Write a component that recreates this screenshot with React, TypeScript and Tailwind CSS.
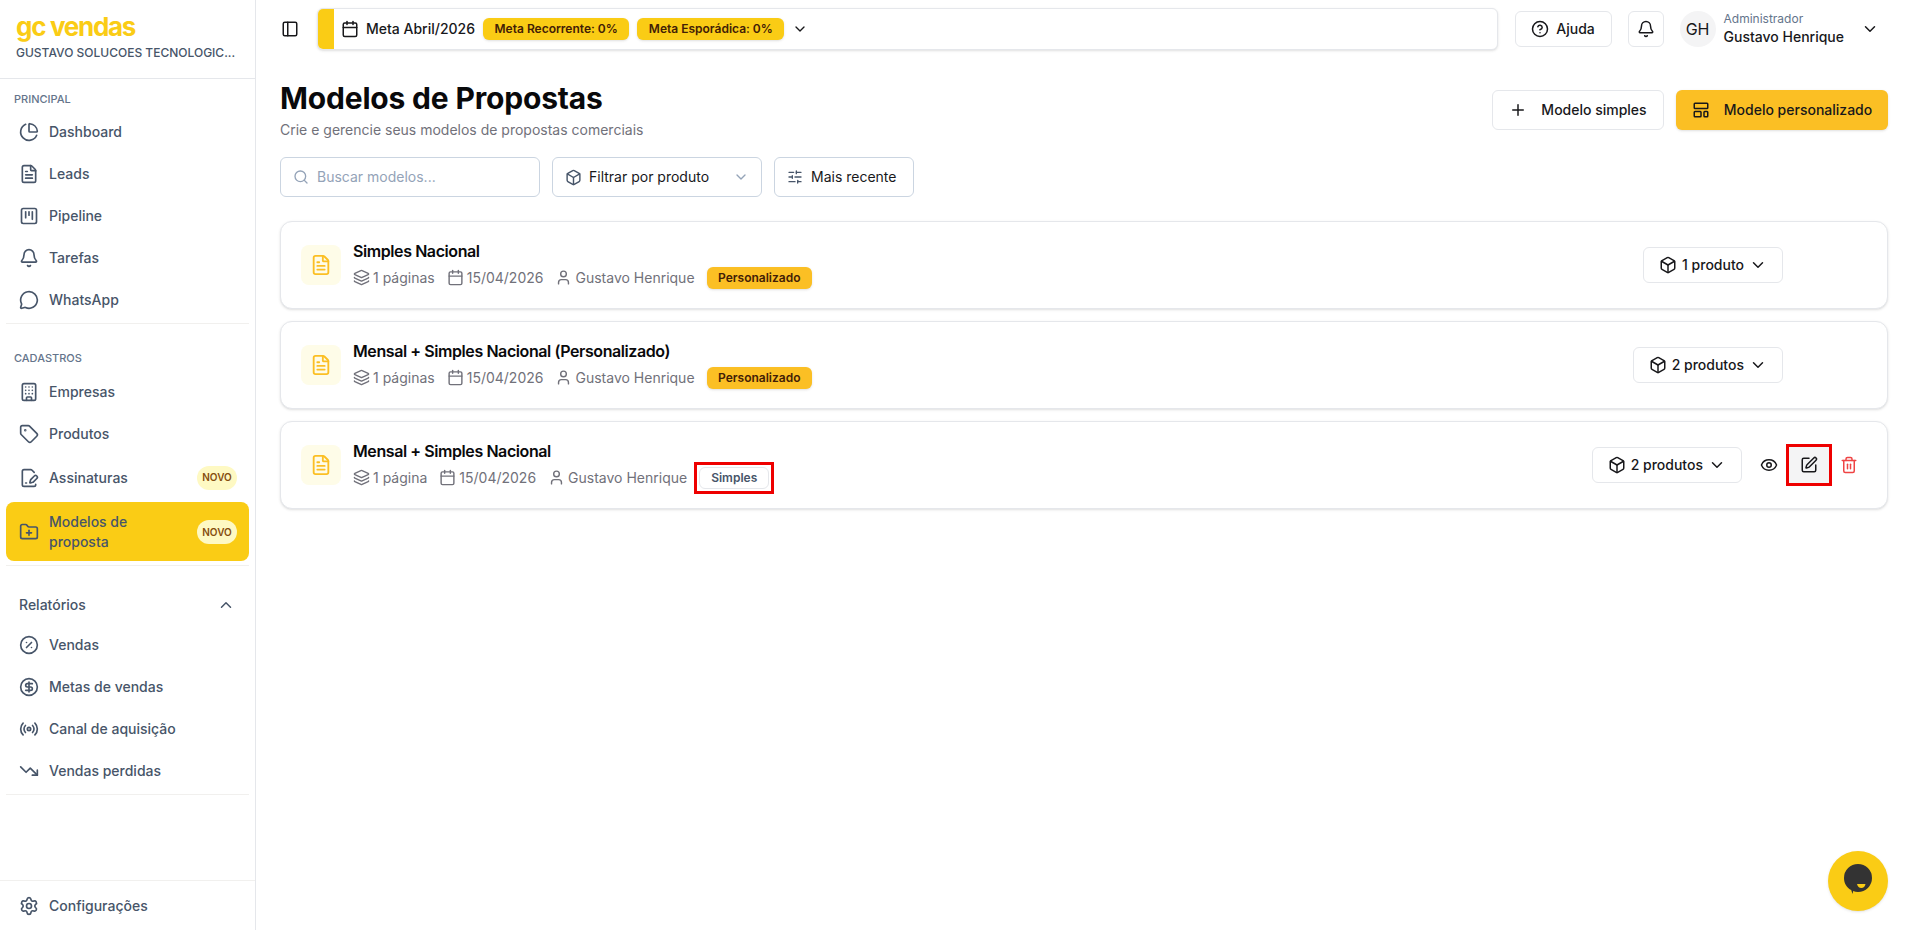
import {
  Bell,
  Building,
  Calendar,
  ChartPie,
  ChevronDown,
  ChevronUp,
  CircleDollarSign,
  CircleHelp,
  CirclePercent,
  Eye,
  FilePenLine,
  FileText,
  FolderPlus,
  Layers,
  LayoutTemplate,
  MessageCircle,
  Box,
  PanelLeft,
  Plus,
  Radio,
  Search,
  Settings,
  SlidersHorizontal,
  SquareKanban,
  SquarePen,
  Tag,
  Trash2,
  TrendingDown,
  User,
} from "lucide-react";
import type { ReactNode } from "react";

function NavItem({ icon, label }: { icon: ReactNode; label: string }) {
  return (
    <a className="flex h-[42px] items-center gap-[10px] rounded-lg pl-[13px] pr-3 text-sm font-medium text-[#475569]">
      {icon}
      <span>{label}</span>
    </a>
  );
}

function NovoBadge() {
  return (
    <span className="flex h-6 w-10 shrink-0 items-center justify-center rounded-full bg-[#fef9c3] text-[10px] font-semibold text-[#854d0e]">
      NOVO
    </span>
  );
}

function Sidebar() {
  return (
    <aside className="flex h-screen w-[256px] shrink-0 flex-col border-r border-[#e5e7eb] bg-white">
      <div className="h-[79px] border-b border-[#e5e7eb] pl-4 pt-[11px]">
        <div className="text-[26px] font-bold leading-8 tracking-[-0.05em] text-[#facc15]">gc vendas</div>
        <div className="mt-[2px] text-[12px] font-medium leading-4 text-[#475569]">GUSTAVO SOLUCOES TECNOLOGIC...</div>
      </div>

      <div className="px-[6px]">
        <div className="mt-3 mb-1 h-4 pl-2 text-[11px] font-medium uppercase leading-4 text-[#64748b]">Principal</div>
        <NavItem icon={<ChartPie size={20} />} label="Dashboard" />
        <NavItem icon={<FileText size={20} />} label="Leads" />
        <NavItem icon={<SquareKanban size={20} />} label="Pipeline" />
        <NavItem icon={<Bell size={20} />} label="Tarefas" />
        <NavItem icon={<MessageCircle size={20} />} label="WhatsApp" />
        <div className="mt-[2px] border-t border-[#f1f0ee]" />

        <div className="mt-[26px] mb-[5px] h-4 pl-2 text-[11px] font-medium uppercase leading-4 text-[#64748b]">Cadastros</div>
        <NavItem icon={<Building size={20} />} label="Empresas" />
        <NavItem icon={<Tag size={20} />} label="Produtos" />
        <a className="flex h-[45px] items-center gap-[10px] rounded-lg pl-[13px] pr-3 text-sm font-medium text-[#475569]">
          <FilePenLine size={20} />
          <span className="flex-1">Assinaturas</span>
          <NovoBadge />
        </a>
        <a className="mt-[2px] flex h-[59px] items-center gap-[10px] rounded-lg bg-[#facc15] pl-[13px] pr-3 text-sm font-medium leading-5 text-[#475569]">
          <FolderPlus size={20} />
          <span className="flex-1">
            Modelos de
            <br />
            proposta
          </span>
          <NovoBadge />
        </a>
        <div className="mt-1 border-t border-[#f1f0ee]" />

        <div className="mt-[29px] mb-[9px] flex h-5 items-center justify-between pl-[13px] pr-[14px] text-sm font-medium text-[#475569]">
          <span>Relatórios</span>
          <ChevronUp size={18} />
        </div>
        <NavItem icon={<CirclePercent size={20} />} label="Vendas" />
        <NavItem icon={<CircleDollarSign size={20} />} label="Metas de vendas" />
        <NavItem icon={<Radio size={20} />} label="Canal de aquisição" />
        <NavItem icon={<TrendingDown size={20} />} label="Vendas perdidas" />
        <div className="mt-[2px] border-t border-[#f1f0ee]" />
      </div>

      <div className="mt-auto border-t border-[#f1f0ee] px-[6px] pb-[3px] pt-[4px]">
        <NavItem icon={<Settings size={20} />} label="Configurações" />
      </div>
    </aside>
  );
}

function GoalBadge({ children }: { children: ReactNode }) {
  return (
    <span className="flex h-[22px] items-center rounded-md bg-[#facc15] px-[11.5px] text-[12px] font-semibold text-[#422006] shadow-sm">
      {children}
    </span>
  );
}

function Header() {
  return (
    <header className="flex h-[58px] items-center pl-[25px] pr-[33px]">
      <PanelLeft size={18} className="mr-[18px] text-[#18181b]" />
      <div className="flex h-[42px] flex-1 items-center gap-2 overflow-hidden rounded-md border border-[#e5e7eb] bg-white shadow-sm">
        <div className="h-full w-[16px] bg-[#facc15]" />
        <Calendar size={18} className="ml-[-1px] text-[#18181b]" />
        <span className="ml-[-1px] text-sm font-medium text-[#18181b]">Meta Abril/2026</span>
        <GoalBadge>Meta Recorrente: 0%</GoalBadge>
        <GoalBadge>Meta Esporádica: 0%</GoalBadge>
        <ChevronDown size={16} className="text-[#18181b]" />
      </div>
      <button className="ml-[17px] flex h-9 w-[97px] items-center justify-center gap-[7px] rounded-md border border-[#e5e7eb] bg-white text-sm font-medium text-[#18181b]">
        <CircleHelp size={18} />
        Ajuda
      </button>
      <button className="ml-4 flex h-9 w-9 items-center justify-center rounded-md border border-[#e5e7eb] bg-white text-[#18181b]">
        <Bell size={18} />
      </button>
      <div className="ml-4 flex h-9 w-9 items-center justify-center rounded-full bg-[#f4f4f5] text-base text-[#18181b]">GH</div>
      <div className="ml-2 flex flex-col">
        <span className="text-[12px] leading-4 text-[#64748b]">Administrador</span>
        <span className="text-sm font-medium leading-5 text-[#18181b]">Gustavo Henrique</span>
      </div>
      <ChevronDown size={18} className="ml-[17px] text-[#18181b]" />
    </header>
  );
}

function MetaItem({ icon, text }: { icon: ReactNode; text: string }) {
  return (
    <span className="flex items-center gap-[3px]">
      {icon}
      {text}
    </span>
  );
}

type Template = {
  title: string;
  pages: string;
  products: string;
  simple?: boolean;
};

const templates: Template[] = [
  { title: "Simples Nacional", pages: "1 páginas", products: "1 produto" },
  { title: "Mensal + Simples Nacional (Personalizado)", pages: "1 páginas", products: "2 produtos" },
  { title: "Mensal + Simples Nacional", pages: "1 página", products: "2 produtos", simple: true },
];

function TemplateCard({ item }: { item: Template }) {
  return (
    <div className="flex h-[88px] items-center rounded-xl border border-[#e5e7eb] bg-white px-5 shadow-sm">
      <div className="flex h-10 w-10 items-center justify-center rounded-lg bg-[#fefce8]">
        <FileText size={22} className="text-[#fbbf24]" />
      </div>
      <div className="mb-[3px] ml-3 flex-1">
        <div className="text-base font-semibold leading-6 tracking-[-0.026em] text-[#09090b]">{item.title}</div>
        <div className="mt-1 flex items-center gap-3 text-sm leading-5 text-[#71717a]">
          <MetaItem icon={<Layers size={17} />} text={item.pages} />
          <MetaItem icon={<Calendar size={17} />} text="15/04/2026" />
          <MetaItem icon={<User size={17} />} text="Gustavo Henrique" />
          {item.simple ? (
            <span className="-my-[5px] ml-[-5px] border-[3px] border-[#ee0000] p-[2px]">
              <span className="flex h-[22px] items-center rounded-md border border-[#e5e7eb] px-[11px] text-[12px] font-semibold text-[#475569]">
                Simples
              </span>
            </span>
          ) : (
            <span className="flex h-[22px] items-center rounded-md bg-[#fbbf24] px-[11.5px] text-[12px] font-semibold text-[#422006] shadow-sm">
              Personalizado
            </span>
          )}
        </div>
      </div>
      <button className="flex h-9 items-center gap-[5px] rounded-md border border-[#e5e7eb] bg-white px-[15px] text-sm font-medium text-[#18181b]">
        <Box size={18} />
        {item.products}
        <ChevronDown size={18} />
      </button>
      {item.simple ? (
        <div className="ml-[7px] mr-[-2px] flex items-center">
          <button className="flex h-9 w-10 items-center justify-center text-[#18181b]">
            <Eye size={18} />
          </button>
          <span className="-mx-[3px] -my-[3px] border-[3px] border-[#ee0000]">
            <button className="flex h-9 w-10 items-center justify-center bg-[#f4f4f5] text-[#18181b]">
              <SquarePen size={18} />
            </button>
          </span>
          <button className="flex h-9 w-10 items-center justify-center text-[#ef4444]">
            <Trash2 size={18} />
          </button>
        </div>
      ) : (
        <div className="w-[84px]" />
      )}
    </div>
  );
}

export default function App() {
  return (
    <div className="flex h-screen overflow-hidden bg-white font-['Inter',sans-serif]">
      <Sidebar />
      <div className="flex min-w-0 flex-1 flex-col">
        <Header />
        <main className="px-6 pt-[22px]">
          <div className="flex items-start justify-between">
            <div>
              <h1 className="text-3xl font-bold leading-9 tracking-[-0.006em] text-[#09090b]">Modelos de Propostas</h1>
              <p className="mt-1 text-sm leading-5 text-[#71717a]">Crie e gerencie seus modelos de propostas comerciais</p>
            </div>
            <div className="mt-[10px] flex gap-3">
              <button className="flex h-10 w-[172px] items-center justify-center gap-[14px] rounded-md border border-[#e5e7eb] bg-white text-sm font-medium text-[#18181b]">
                <Plus size={18} />
                Modelo simples
              </button>
              <button className="flex h-10 w-[212px] items-center justify-center gap-[14px] rounded-md bg-[#fbbf24] text-sm font-medium text-[#18181b] shadow-sm">
                <LayoutTemplate size={18} />
                Modelo personalizado
              </button>
            </div>
          </div>

          <div className="mt-[17px] flex gap-3">
            <div className="flex h-10 w-[260px] items-center gap-2 rounded-md border border-[#cbd5e1] bg-white px-3 text-sm text-[#94a3b8]">
              <Search size={16} />
              Buscar modelos...
            </div>
            <div className="flex h-10 w-[210px] items-center rounded-md border border-[#cbd5e1] bg-white px-3 text-sm text-[#18181b]">
              <Box size={17} className="text-[#475569]" />
              <span className="ml-[7px] flex-1">Filtrar por produto</span>
              <ChevronDown size={16} className="text-[#94a3b8]" />
            </div>
            <div className="flex h-10 w-[140px] items-center gap-2 rounded-md border border-[#cbd5e1] bg-white px-3 text-sm text-[#18181b]">
              <SlidersHorizontal size={16} className="text-[#475569]" />
              Mais recente
            </div>
          </div>

          <div className="mt-[24px] flex flex-col gap-3">
            {templates.map((item) => (
              <TemplateCard key={item.title} item={item} />
            ))}
          </div>
        </main>
      </div>

      <div className="fixed bottom-[19px] right-[24px] flex h-[60px] w-[60px] items-center justify-center rounded-full bg-[#facc15] shadow-sm">
        <svg width="28" height="32" viewBox="0 0 28 32" className="mt-[-2px]">
          <path d="M14 0a14 14 0 0 1 0 28c-1.700 0-3.300-.3-4.800-.9L8.500 30l-1.300-4C3 24 0 19.500 0 14A14 14 0 0 1 14 0z" fill="#333333" />
          <path d="M13 20h8.500c-.5 2.500-2 4-4.200 4s-3.700-1.500-4.300-4z" fill="#facc15" />
        </svg>
      </div>
    </div>
  );
}
